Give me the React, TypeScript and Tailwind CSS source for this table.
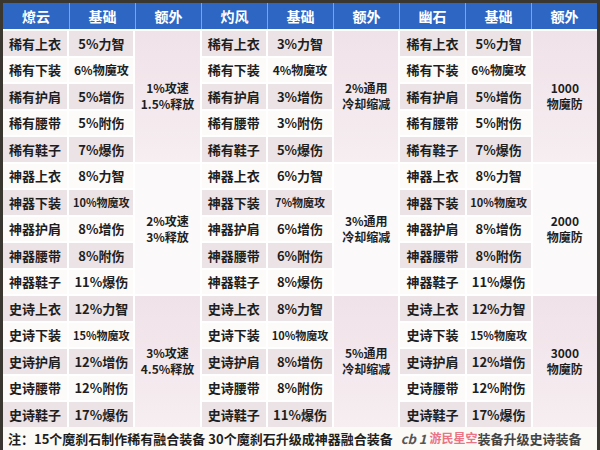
import React from "react";

type Group = {
  name: string;
  base: string[][];
  extra: string[][];
};

const parts = ["上衣", "下装", "护肩", "腰带", "鞋子"];
const tiers = ["稀有", "神器", "史诗"];

const groups: Group[] = [
  {
    name: "燎云",
    base: [
      ["5%力智", "6%物魔攻", "5%增伤", "5%附伤", "7%爆伤"],
      ["8%力智", "10%物魔攻", "8%增伤", "8%附伤", "11%爆伤"],
      ["12%力智", "15%物魔攻", "12%增伤", "12%附伤", "17%爆伤"],
    ],
    extra: [
      ["1%攻速", "1.5%释放"],
      ["2%攻速", "3%释放"],
      ["3%攻速", "4.5%释放"],
    ],
  },
  {
    name: "灼风",
    base: [
      ["3%力智", "4%物魔攻", "3%增伤", "3%附伤", "5%爆伤"],
      ["6%力智", "7%物魔攻", "6%增伤", "6%附伤", "8%爆伤"],
      ["8%力智", "10%物魔攻", "8%增伤", "8%附伤", "11%爆伤"],
    ],
    extra: [
      ["2%通用", "冷却缩减"],
      ["3%通用", "冷却缩减"],
      ["5%通用", "冷却缩减"],
    ],
  },
  {
    name: "幽石",
    base: [
      ["5%力智", "6%物魔攻", "5%增伤", "5%附伤", "7%爆伤"],
      ["8%力智", "10%物魔攻", "8%增伤", "8%附伤", "11%爆伤"],
      ["12%力智", "15%物魔攻", "12%增伤", "12%附伤", "17%爆伤"],
    ],
    extra: [
      ["1000", "物魔防"],
      ["2000", "物魔防"],
      ["3000", "物魔防"],
    ],
  },
];

const font = { fontFamily: '"Noto Sans CJK SC", "Noto Sans", sans-serif' };

function baseSize(v: string) {
  if (v.includes("物魔攻")) {
    if (/^\d\d%/.test(v) || v.startsWith("7%")) return "text-[11px]";
    return "text-[12px]";
  }
  return "text-[13px]";
}

export default function App() {
  const cells: React.ReactNode[] = [];
  for (let t = 0; t < 3; t++) {
    for (let p = 0; p < 5; p++) {
      const r = t * 5 + p;
      const shaded = r % 2 === 0;
      const bg = shaded ? "bg-[#ebe3e5]" : "bg-[#fcfbf9]";
      groups.forEach((g, gi) => {
        cells.push(
          <div
            key={`n-${r}-${gi}`}
            className={`${bg} flex items-center justify-center text-[13px] font-bold text-[#1e1e1e]`}
          >
            {tiers[t] + parts[p]}
          </div>
        );
        const v = g.base[t][p];
        cells.push(
          <div
            key={`b-${r}-${gi}`}
            className={`${bg} flex items-center justify-center ${baseSize(v)} font-bold text-[#1e1e1e]`}
          >
            {v}
          </div>
        );
        if (p === 0) {
          const pink = t !== 1;
          cells.push(
            <div
              key={`e-${r}-${gi}`}
              className={`row-span-5 flex flex-col items-center justify-center text-[12px] leading-[16px] font-bold text-[#1e1e1e] ${
                pink
                  ? "bg-gradient-to-b from-[#f0e2e9] to-[#f6eef1]"
                  : "bg-[#fbf9f9]"
              }`}
            >
              <span>{g.extra[t][0]}</span>
              <span>{g.extra[t][1]}</span>
            </div>
          );
        }
      });
    }
  }

  return (
    <div
      className="w-[600px] h-[450px] bg-[#3a3731] pt-[3px] px-[3px] flex flex-col overflow-hidden"
      style={font}
    >
      <div className="grid grid-cols-9 h-[26px] bg-[#2d66c3] shrink-0">
        {groups.map((g, i) => (
          <React.Fragment key={g.name}>
            <div
              className={`flex items-center justify-center text-white text-[14px] font-bold ${
                i > 0 ? "border-l border-[#7ea3dd]" : ""
              }`}
            >
              {g.name}
            </div>
            <div className="flex items-center justify-center text-white text-[14px] font-bold border-l border-[#7ea3dd]">
              基础
            </div>
            <div className="flex items-center justify-center text-white text-[14px] font-bold border-l border-[#7ea3dd]">
              额外
            </div>
          </React.Fragment>
        ))}
      </div>
      <div className="bg-white pt-[2px] shrink-0">
        <div className="grid grid-cols-9 grid-rows-[repeat(15,24.5px)] gap-[2px] bg-white">
          {cells}
        </div>
      </div>
      <div className="flex-1 bg-[#fbfaf7] flex items-center pl-[5px] text-[13px] font-bold text-[#1e1e1e] whitespace-nowrap overflow-hidden">
        <span>注：15个魔刹石制作稀有融合装备 30个魔刹石升级成神器融合装备</span>
        <span className="ml-[8px] italic text-[#555]">cb 1</span>
        <span className="ml-[3px] text-[12px] text-[#e8526a] opacity-80">游民星空</span>
        <span className="text-[13px] text-[#444]">装备升级史诗装备</span>
      </div>
    </div>
  );
}
